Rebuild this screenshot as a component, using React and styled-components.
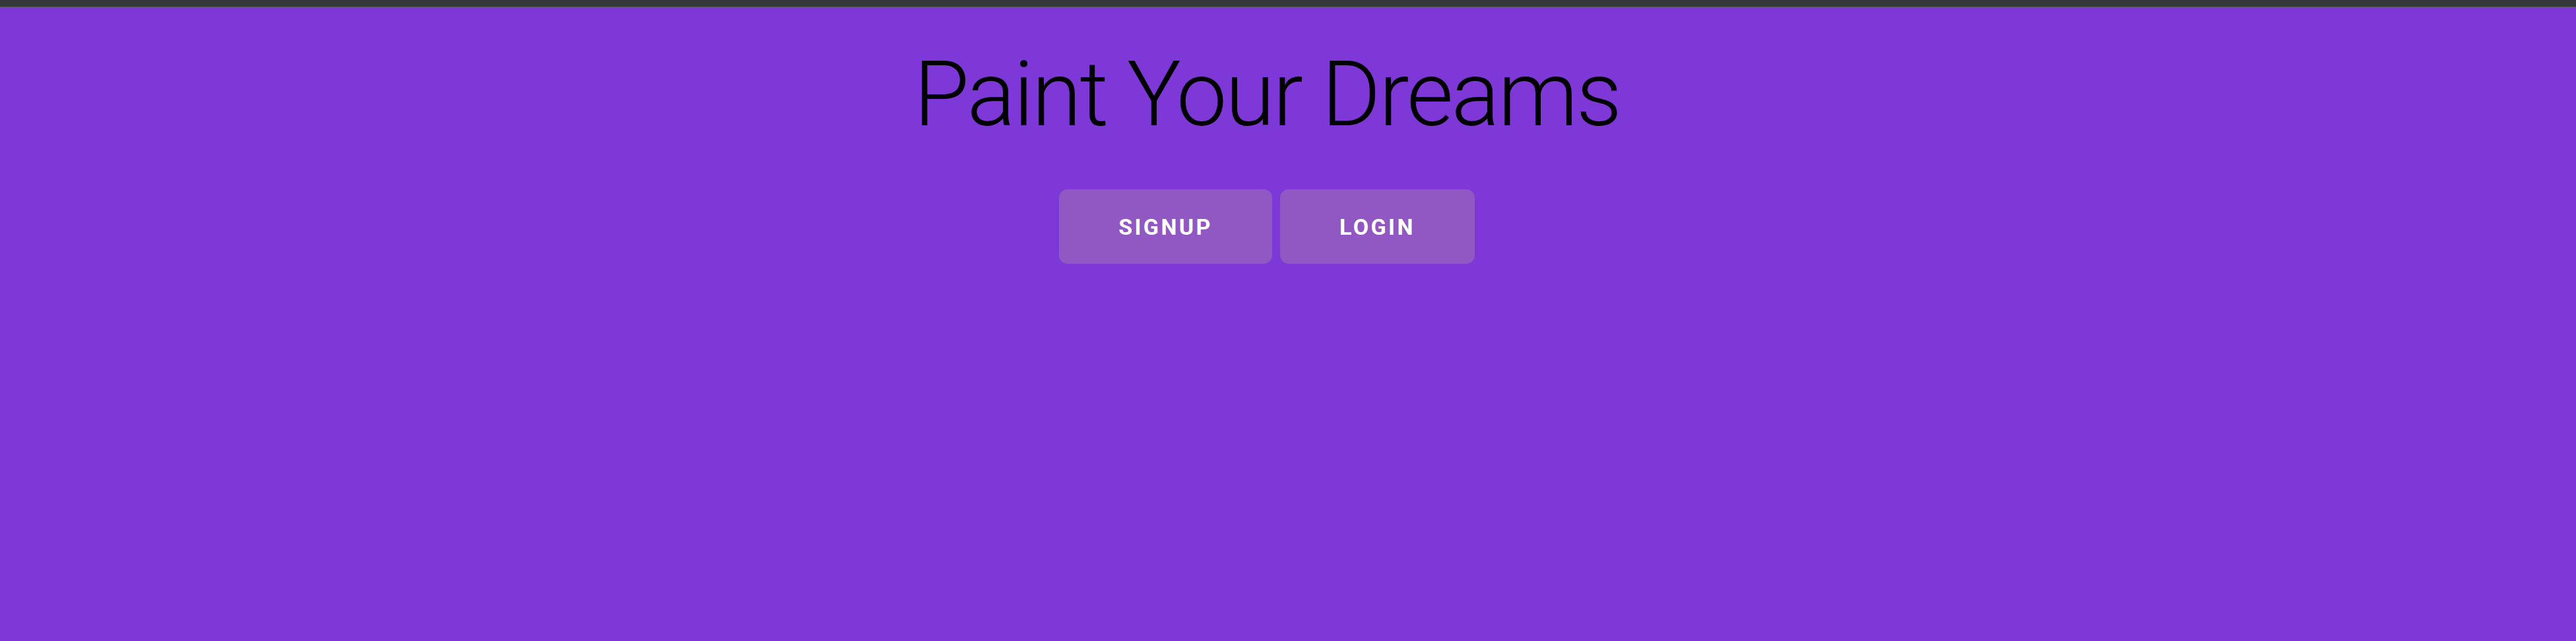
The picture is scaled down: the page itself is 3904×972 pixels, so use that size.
import React from "react";
import styled, { createGlobalStyle } from "styled-components";

const GlobalStyle = createGlobalStyle`
  html, body {
    margin: 0;
    padding: 0;
    background: #7f38d8;
  }
  body {
    font-family: Roboto, "Liberation Sans", Arial, sans-serif;
  }
`;

const TopBar = styled.div`
  height: 10px;
  background: #36373b;
  border-bottom: 2px solid #5a5b5e;
`;

const Page = styled.main`
  min-height: 960px;
  background: #7f38d8;
`;

const Content = styled.section`
  max-width: 3840px;
  display: flex;
  flex-direction: column;
  align-items: center;
  padding-top: 49px;
`;

const Title = styled.h1`
  margin: 0;
  font-family: Roboto, "Liberation Sans", sans-serif;
  font-weight: 300;
  font-size: 137px;
  letter-spacing: -2.9px;
  line-height: 1.2;
  color: #000;
`;

const Actions = styled.div`
  display: flex;
  gap: 12px;
  margin-top: 62px;
`;

const ActionButton = styled.button`
  height: 113px;
  padding: 0 90px;
  border: none;
  border-radius: 13px;
  background: #9157c2;
  color: #fff;
  font-family: Roboto, "Liberation Sans", sans-serif;
  font-weight: 700;
  font-size: 34px;
  letter-spacing: 3.4px;
  text-transform: uppercase;
  cursor: pointer;
`;

export default function App() {
  return (
    <>
      <GlobalStyle />
      <TopBar />
      <Page>
        <Content>
          <Title>Paint Your Dreams</Title>
          <Actions>
            <ActionButton>Signup</ActionButton>
            <ActionButton>Login</ActionButton>
          </Actions>
        </Content>
      </Page>
    </>
  );
}
